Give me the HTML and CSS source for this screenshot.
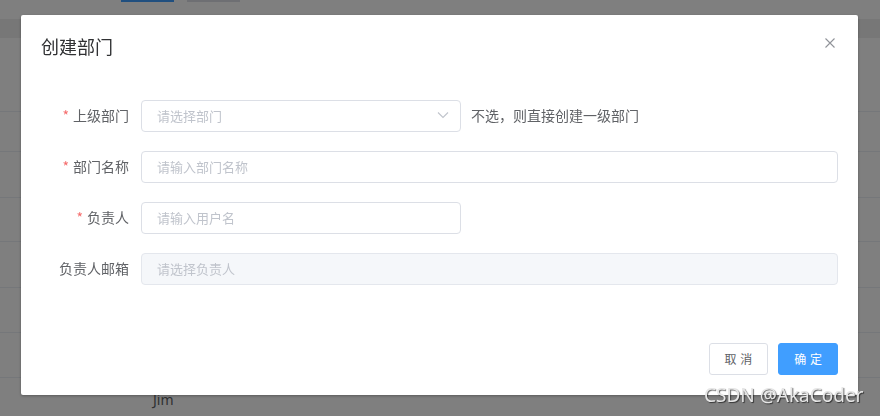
FILE: index.html
```html
<!DOCTYPE html>
<html lang="zh-CN">
<head>
<meta charset="utf-8">
<title>创建部门</title>
<link rel="stylesheet" href="styles.css">
</head>
<body>
<div class="page">
  <div class="toolbar">
    <span class="tb-btn tb-primary"></span>
    <span class="tb-btn tb-default"></span>
  </div>
  <div class="table">
    <div class="thead"></div>
    <div class="row h73"></div>
    <div class="row h39"></div>
    <div class="row h45"></div>
    <div class="row h43"></div>
    <div class="row h45"></div>
    <div class="row h44"></div>
    <div class="row h44"></div>
    <div class="row last"><span class="cell">Jim</span></div>
  </div>
</div>

<div class="mask"></div>

<div class="dialog-wrap">
  <div class="dialog">
    <div class="dialog-header">
      <span class="dialog-title">创建部门</span>
      <button class="dialog-close" type="button" aria-label="Close">
        <svg width="16" height="16" viewBox="0 0 16 16"><path d="M3.5 3.5 L12.5 12.5 M12.5 3.5 L3.5 12.5" stroke="#909399" stroke-width="1.1" fill="none"/></svg>
      </button>
    </div>
    <div class="dialog-body">
      <form class="form">
        <div class="form-item">
          <label class="form-label"><span class="req">*</span>上级部门</label>
          <div class="form-content">
            <div class="select">
              <input class="input" type="text" placeholder="请选择部门" readonly>
              <svg class="arrow" width="12" height="8" viewBox="0 0 12 8"><path d="M1 1.5 L6 6.5 L11 1.5" stroke="#c0c4cc" stroke-width="1.1" fill="none"/></svg>
            </div>
            <span class="hint">不选，则直接创建一级部门</span>
          </div>
        </div>
        <div class="form-item">
          <label class="form-label"><span class="req">*</span>部门名称</label>
          <div class="form-content">
            <input class="input full" type="text" placeholder="请输入部门名称">
          </div>
        </div>
        <div class="form-item">
          <label class="form-label"><span class="req">*</span>负责人</label>
          <div class="form-content">
            <input class="input half" type="text" placeholder="请输入用户名">
          </div>
        </div>
        <div class="form-item">
          <label class="form-label">负责人邮箱</label>
          <div class="form-content">
            <input class="input full disabled" type="text" placeholder="请选择负责人" disabled>
          </div>
        </div>
      </form>
    </div>
    <div class="dialog-footer">
      <button class="btn btn-default" type="button">取 消</button>
      <button class="btn btn-primary" type="button">确 定</button>
    </div>
  </div>
</div>

<div class="watermark">CSDN @AkaCoder</div>
</body>
</html>
```

FILE: styles.css
```css
* {
  box-sizing: border-box;
}

html, body {
  margin: 0;
  padding: 0;
  width: 880px;
  height: 416px;
  overflow: hidden;
  background: #ffffff;
  font-family: "Noto Sans CJK SC", "Noto Sans", sans-serif;
}

/* background page */
.page {
  height: 416px;
  overflow: hidden;
}

.toolbar {
  display: flex;
  align-items: flex-start;
  gap: 13px;
  height: 19px;
  padding-left: 121px;
}

.tb-btn {
  display: block;
  width: 53px;
  height: 2px;
}

.tb-primary {
  background: #409eff;
}

.tb-default {
  background: #dcdfe6;
}

.thead {
  height: 19px;
  background: #eeeeee;
}

.row {
  border-bottom: 1px solid #ebeef5;
}

.h73 { height: 74px; }
.h39 { height: 40px; }
.h45 { height: 46px; }
.h43 { height: 44px; }
.h44 { height: 45px; }

.row.last {
  border-bottom: none;
  padding: 8px 0 0 153px;
}

.cell {
  font-family: "Noto Sans", sans-serif;
  font-size: 14px;
  line-height: 23px;
  color: #606266;
}

/* mask + dialog */
.mask {
  position: fixed;
  inset: 0;
  background: rgba(0, 0, 0, 0.5);
}

.dialog-wrap {
  position: fixed;
  inset: 0;
}

.dialog {
  position: relative;
  width: 837px;
  margin: 15px 0 0 21px;
  background: #ffffff;
  border-radius: 2px;
  box-shadow: 0 1px 3px rgba(0, 0, 0, 0.3);
}

.dialog-header {
  padding: 20px 20px 10px;
}

.dialog-title {
  display: block;
  font-size: 18px;
  line-height: 22px;
  padding-bottom: 2px;
  color: #303133;
}

.dialog-close {
  position: absolute;
  top: 20px;
  right: 20px;
  width: 16px;
  height: 16px;
  padding: 0;
  border: none;
  background: transparent;
  display: flex;
}

.dialog-body {
  padding: 31px 20px 48px;
}

.form {
  display: flex;
  flex-direction: column;
  gap: 19px;
  margin: 0;
}

.form-item {
  display: flex;
}

.form-label {
  width: 100px;
  flex: none;
  padding-right: 12px;
  padding-bottom: 2px;
  text-align: right;
  font-size: 14px;
  line-height: 30px;
  color: #606266;
}

.req {
  color: #f56c6c;
  margin-right: 4px;
}

.form-content {
  flex: 1;
  display: flex;
  align-items: flex-start;
}

.select {
  position: relative;
  width: 320px;
  flex: none;
}

.input {
  display: block;
  height: 32px;
  width: 320px;
  padding: 0 15px 2px;
  border: 1px solid #dcdfe6;
  border-radius: 4px;
  background: #ffffff;
  font-family: "Noto Sans CJK SC", "Noto Sans", sans-serif;
  font-size: 13px;
  color: #606266;
  outline: none;
}

.input::placeholder {
  color: #c0c4cc;
  opacity: 1;
}

.select .input {
  padding-right: 30px;
}

.arrow {
  position: absolute;
  right: 12px;
  top: 11px;
}

.input.full {
  width: 100%;
}

.input.disabled {
  background: #f5f7fa;
  border-color: #e4e7ed;
}

.hint {
  margin-left: 10px;
  font-size: 14px;
  line-height: 30px;
  padding-bottom: 2px;
  color: #606266;
}

.dialog-footer {
  display: flex;
  justify-content: flex-end;
  gap: 10px;
  padding: 10px 20px 20px;
}

.btn {
  height: 32px;
  padding: 0 15px;
  font-family: "Noto Sans CJK SC", "Noto Sans", sans-serif;
  font-size: 12px;
  line-height: 30px;
  border-radius: 3px;
  border: 1px solid #dcdfe6;
  word-spacing: 1px;
  cursor: pointer;
}

.btn-default {
  background: #ffffff;
  color: #606266;
}

.btn-primary {
  background: #409eff;
  border-color: #409eff;
  color: #ffffff;
}

.watermark {
  position: fixed;
  left: 704px;
  top: 383px;
  font-family: "Noto Sans", sans-serif;
  font-size: 19px;
  line-height: 24px;
  color: #e6e6e6;
  text-shadow: 1px 1px 1px rgba(0, 0, 0, 0.6);
  white-space: nowrap;
}
```
